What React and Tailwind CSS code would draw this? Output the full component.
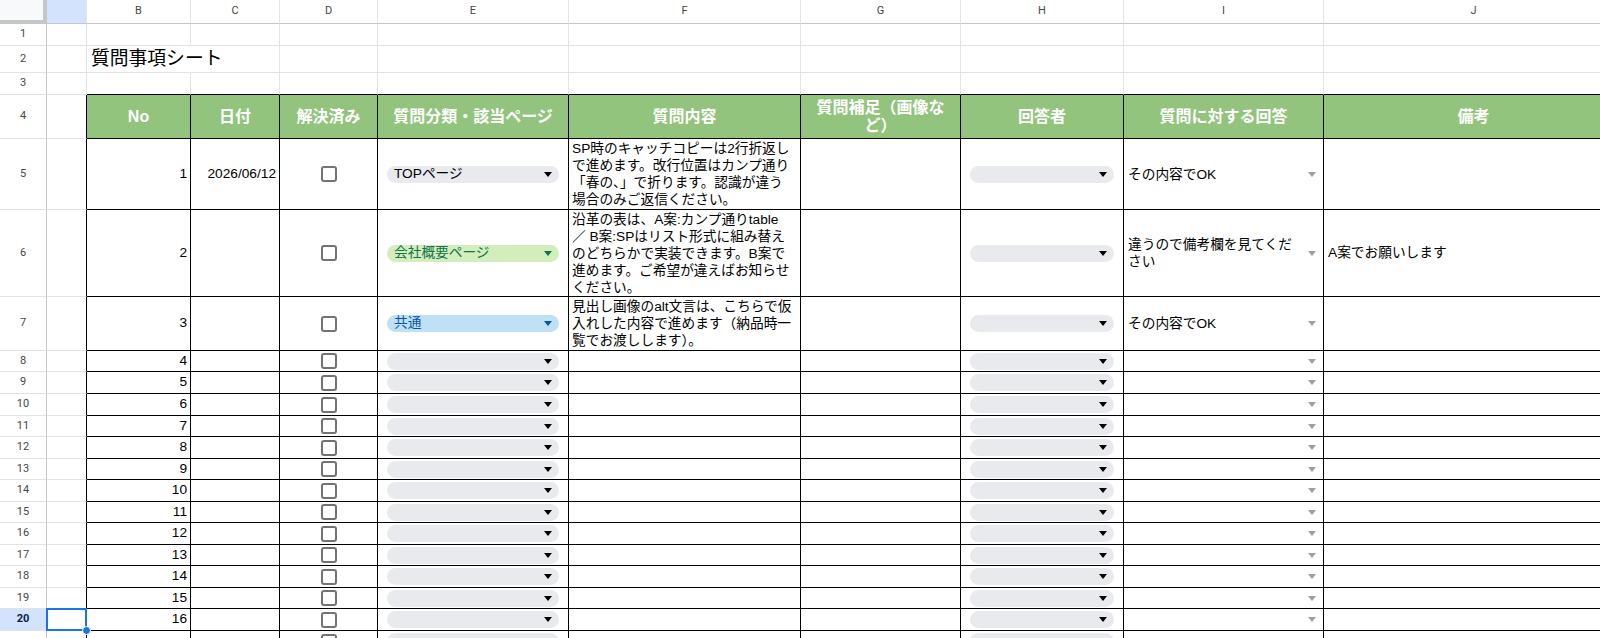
import React from 'react';

const COLS = [
    { id: 'A', w: 'w-[40px]' },
    { id: 'B', w: 'w-[104px]' },
    { id: 'C', w: 'w-[89px]' },
    { id: 'D', w: 'w-[98px]' },
    { id: 'E', w: 'w-[191px]' },
    { id: 'F', w: 'w-[232px]' },
    { id: 'G', w: 'w-[160px]' },
    { id: 'H', w: 'w-[163px]' },
    { id: 'I', w: 'w-[200px]' },
    { id: 'J', w: 'w-[300px]' },
];

const ROW_HEIGHTS = {
    1: 'h-[22px]', 2: 'h-[27px]', 3: 'h-[22px]', 4: 'h-[44px]',
    5: 'h-[71px]', 6: 'h-[87px]', 7: 'h-[54px]',
    8: 'h-[21px]', 9: 'h-[22px]', 10: 'h-[22px]', 11: 'h-[21px]',
    12: 'h-[22px]', 13: 'h-[21px]', 14: 'h-[22px]', 15: 'h-[21px]',
    16: 'h-[22px]', 17: 'h-[21px]', 18: 'h-[22px]', 19: 'h-[21px]',
    20: 'h-[22px]', 21: 'h-[22px]',
};

// last row only peeks in below the fold
const LAST_ROW = 21;

const HEADERS = ['', 'No', '日付', '解決済み', '質問分類・該当ページ', '質問内容', null, '回答者', '質問に対する回答', '備考'];

// question rows (sheet rows 5-7)
const QUESTIONS = {
    5: {
        date: '2026/06/12',
        page: { label: 'TOPページ', tone: 'gray' },
        body: ['SP時のキャッチコピーは2行折返し', 'で進めます。改行位置はカンプ通り', '「春の、」で折ります。認識が違う', '場合のみご返信ください。'],
        answer: ['その内容でOK'],
        note: '',
    },
    6: {
        date: '',
        page: { label: '会社概要ページ', tone: 'green' },
        body: ['沿革の表は、A案:カンプ通りtable', '／ B案:SPはリスト形式に組み替え', 'のどちらかで実装できます。B案で', '進めます。ご希望が違えばお知らせ', 'ください。'],
        answer: ['違うので備考欄を見てくだ', 'さい'],
        note: 'A案でお願いします',
    },
    7: {
        date: '',
        page: { label: '共通', tone: 'blue' },
        body: ['見出し画像のalt文言は、こちらで仮', '入れした内容で進めます（納品時一', '覧でお渡しします）。'],
        answer: ['その内容でOK'],
        note: '',
    },
};

const CHIP_TONES = {
    gray: 'bg-[#e8eaed] text-[#000000]',
    green: 'bg-[#d4edbc] text-[#11734b]',
    blue: 'bg-[#bfe1f6] text-[#0a53a8]',
};

function Caret({ className = '' }) {
    return (
        <svg width="8" height="5" viewBox="0 0 8 5" className={className}>
            <path d="M0 0h8L4 5z" fill="currentColor" />
        </svg>
    );
}

function Chip({ label = '', tone = 'gray' }) {
    return (
        <div className={`mx-[9px] flex h-[17px] flex-1 items-center justify-between rounded-full pl-[7px] pr-[7px] ${CHIP_TONES[tone]}`}>
            <span className="whitespace-nowrap">{label}</span>
            <Caret />
        </div>
    );
}

function Checkbox() {
    return <div className="h-[16px] w-[16px] rounded-[3px] border-2 border-[#737373]" />;
}

function Lines({ lines }) {
    return (
        <div className="whitespace-nowrap leading-[17px]">
            {lines.map((l, i) => (
                <div key={i}>{l}</div>
            ))}
        </div>
    );
}

function cellContent(r, c) {
    if (r === 2 && c === 1) {
        return <span className="whitespace-nowrap pl-[4px] text-[18.8px] text-black">質問事項シート</span>;
    }
    if (r === 4 && c >= 1) {
        if (c === 6) {
            return (
                <div className="text-center leading-[18px]">
                    質問補足（画像な<br />ど）
                </div>
            );
        }
        return <span className="whitespace-nowrap">{HEADERS[c]}</span>;
    }
    if (r < 5 || c === 0) return null;

    const q = QUESTIONS[r];
    switch (c) {
        case 1:
            return r === LAST_ROW ? null : <span className="ml-auto pr-[3px]">{r - 4}</span>;
        case 2:
            return q && q.date ? <span className="ml-auto pr-[3px]">{q.date}</span> : null;
        case 3:
            return <Checkbox />;
        case 4:
            return q ? <Chip label={q.page.label} tone={q.page.tone} /> : <Chip />;
        case 5:
            return q ? <div className="pl-[3px]"><Lines lines={q.body} /></div> : null;
        case 7:
            return <Chip />;
        case 8:
            return (
                <div className="flex flex-1 items-center justify-between pl-[4px] pr-[7px]">
                    {q ? <Lines lines={q.answer} /> : <span />}
                    <Caret className="text-[#9e9e9e]" />
                </div>
            );
        case 9:
            return q && q.note ? <span className="whitespace-nowrap pl-[4px]">{q.note}</span> : null;
        default:
            return null;
    }
}

function SheetCell({ r, c }) {
    const col = COLS[c];
    const rightBlack = r >= 4;
    const bottomBlack = r >= 3 && c >= 1;
    const hideRight = r === 2 && c === 1;

    let align = 'justify-start';
    if (c === 3 || (r === 4 && c >= 1)) align = 'justify-center';

    const header = r === 4 && c >= 1;
    const selected = r === 20 && c === 0;

    return (
        <div
            className={`relative flex shrink-0 items-center border-r border-b ${col.w} ${align} ${
                hideRight ? 'border-r-transparent' : rightBlack ? 'border-r-black' : 'border-r-[#e2e3e3]'
            } ${bottomBlack ? 'border-b-black' : 'border-b-[#e2e3e3]'} ${
                header ? 'bg-[#93c47d] text-[16px] font-bold text-white' : ''
            } ${selected ? 'z-10' : ''}`}
        >
            {cellContent(r, c)}
            {selected && (
                <>
                    <div className="absolute -top-[1px] -left-[1px] -right-[1px] -bottom-[1px] border-2 border-[#1a73e8]" />
                    <div className="absolute -right-[5px] -bottom-[5px] h-[9px] w-[9px] rounded-full border border-white bg-[#1a73e8]" />
                </>
            )}
        </div>
    );
}

function SheetRow({ r }) {
    const active = r === 20;
    return (
        <div className={`flex ${ROW_HEIGHTS[r]}`}>
            <div
                className={`flex w-[47px] shrink-0 items-center justify-center border-r border-b border-r-[#c4c7c5] border-b-[#e2e3e3] font-['Roboto',sans-serif] text-[11px] ${
                    active ? 'bg-[#d3e3fd] font-bold text-[#041e49]' : 'text-[#444746]'
                }`}
            >
                {r === LAST_ROW ? '' : r}
            </div>
            {COLS.map((_, c) => (
                <SheetCell key={c} r={r} c={c} />
            ))}
        </div>
    );
}

export default function App() {
    const rows = Array.from({ length: LAST_ROW }, (_, i) => i + 1);
    return (
        <div className="h-[638px] w-[1600px] overflow-hidden bg-white font-['Liberation_Sans','Noto_Sans_CJK_JP',sans-serif] text-[13.7px] text-black">
            {/* column letters */}
            <div className="flex h-[24px]">
                <div className="w-[47px] shrink-0 border-r-4 border-b-4 border-r-[#c4c7c5] border-b-[#c4c7c5] bg-[#f8f9fa]" />
                {COLS.map((col) => (
                    <div
                        key={col.id}
                        className={`flex shrink-0 items-center justify-center border-r border-b border-r-[#e2e3e3] border-b-[#c4c7c5] font-['Roboto',sans-serif] text-[11px] text-[#444746] ${col.w} ${
                            col.id === 'A' ? 'bg-[#d3e3fd]' : ''
                        }`}
                    >
                        {col.id === 'A' ? '' : col.id}
                    </div>
                ))}
            </div>
            {rows.map((r) => (
                <SheetRow key={r} r={r} />
            ))}
        </div>
    );
}
